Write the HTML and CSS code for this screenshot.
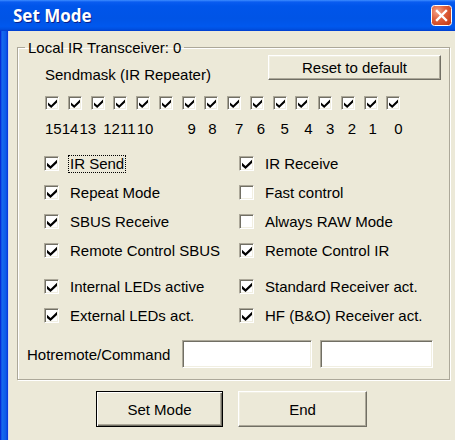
FILE: index.html
```html
<!DOCTYPE html>
<html lang="en">
<head>
<meta charset="utf-8">
<title>Set Mode</title>
<link rel="stylesheet" href="styles.css">
</head>
<body>
<div class="window">
  <div class="titlebar">
    <span class="title">Set Mode</span>
    <button class="close" aria-label="Close">
      <svg width="21" height="21" viewBox="0 0 21 21">
        <defs>
          <radialGradient id="closeFill" cx="0.3" cy="0.3" r="0.9">
            <stop offset="0" stop-color="#f4a48a"/>
            <stop offset="0.45" stop-color="#e0603c"/>
            <stop offset="1" stop-color="#c23a14"/>
          </radialGradient>
        </defs>
        <rect x="0.5" y="0.5" width="20" height="20" rx="3" fill="url(#closeFill)" stroke="#fff"/>
        <path d="M6 6 L15 15 M15 6 L6 15" stroke="#fff" stroke-width="2.4" stroke-linecap="square"/>
      </svg>
    </button>
  </div>
  <div class="frame">
    <div class="client">
      <fieldset class="group">
        <legend>Local IR Transceiver: 0</legend>

        <div class="mask-head">
          <span class="mask-label">Sendmask (IR Repeater)</span>
          <button class="btn reset">Reset to default</button>
        </div>

        <div class="mask-boxes">
          <span class="cb on"></span><span class="cb on"></span><span class="cb on"></span><span class="cb on"></span>
          <span class="cb on"></span><span class="cb on"></span><span class="cb on"></span><span class="cb on"></span>
          <span class="cb on"></span><span class="cb on"></span><span class="cb on"></span><span class="cb on"></span>
          <span class="cb on"></span><span class="cb on"></span><span class="cb on"></span><span class="cb on"></span>
        </div>

        <div class="mask-nums">
          <span>15</span><span>14</span><span>13</span><span>12</span>
          <span>11</span><span>10</span><span>9</span><span>8</span>
          <span>7</span><span>6</span><span>5</span><span>4</span>
          <span>3</span><span>2</span><span>1</span><span>0</span>
        </div>

        <div class="opts">
          <label class="opt"><span class="cb on"></span><span class="txt focus">IR Send</span></label>
          <label class="opt"><span class="cb on"></span><span class="txt">IR Receive</span></label>
          <label class="opt"><span class="cb on"></span><span class="txt">Repeat Mode</span></label>
          <label class="opt"><span class="cb"></span><span class="txt">Fast control</span></label>
          <label class="opt"><span class="cb on"></span><span class="txt">SBUS Receive</span></label>
          <label class="opt"><span class="cb"></span><span class="txt">Always RAW Mode</span></label>
          <label class="opt"><span class="cb on"></span><span class="txt">Remote Control SBUS</span></label>
          <label class="opt"><span class="cb on"></span><span class="txt">Remote Control IR</span></label>
        </div>

        <div class="opts leds">
          <label class="opt"><span class="cb on"></span><span class="txt">Internal LEDs active</span></label>
          <label class="opt"><span class="cb on"></span><span class="txt">Standard Receiver act.</span></label>
          <label class="opt"><span class="cb on"></span><span class="txt">External LEDs act.</span></label>
          <label class="opt"><span class="cb on"></span><span class="txt">HF (B&amp;O) Receiver act.</span></label>
        </div>

        <div class="hot-row">
          <span class="hot-label">Hotremote/Command</span>
          <span class="field wide"></span>
          <span class="field narrow"></span>
        </div>
      </fieldset>

      <div class="actions">
        <button class="btn default">Set Mode</button>
        <button class="btn end">End</button>
      </div>
    </div>
  </div>
</div>
</body>
</html>
```
FILE: styles.css
```css
* {
  box-sizing: border-box;
}

html,
body {
  margin: 0;
  padding: 0;
}

body {
  width: 455px;
  height: 440px;
  overflow: hidden;
  background: #ece9d8;
  color: #000;
  font-family: "Liberation Sans", Arial, sans-serif;
  font-size: 15px;
  line-height: 17px;
}

/* ---------- window chrome ---------- */

.window {
  width: 455px;
  height: 440px;
  display: flex;
  flex-direction: column;
}

.titlebar {
  flex: none;
  height: 31px;
  display: flex;
  align-items: center;
  padding: 0 3px 0 13px;
  background: linear-gradient(180deg, #3d8dff 0, #0a5cf0 2px, #0055ea 6px, #0054e6 60%, #0058ee 85%, #0050e0 94%, #003ccf 100%);
}

.title {
  flex: 1;
  color: #fff;
  font-family: "Open Sans", "DejaVu Sans", sans-serif;
  font-weight: 700;
  font-size: 17px;
  line-height: 20px;
  text-shadow: 1px 1px 0 #0a1f8a;
}

.close {
  width: 21px;
  height: 21px;
  padding: 0;
  border: 0;
  background: none;
  display: block;
}

.close svg {
  display: block;
}

.frame {
  flex: 1;
  display: flex;
  padding: 0 0 3px 8px;
  background:
    linear-gradient(to right, #0019cf 0, #166aee 2px, #0b5ae8 6px, #0831d9 8px) left top / 8px 100% no-repeat,
    #0a3fdc;
}

.client {
  flex: 1;
  background: #ece9d8;
  box-shadow: inset 1px 0 0 #d6dbf0;
  padding: 8px 0 13px 9px;
}

/* ---------- group box ---------- */

.group {
  margin: 0;
  width: 433px;
  padding: 0 0 11px 0;
  border: 1px solid #aca899;
  box-shadow: inset 1px 1px 0 #fff, 1px 1px 0 #fff;
}

.group legend {
  margin-left: 7px;
  padding: 0 3px;
}

.mask-head {
  display: flex;
  align-items: flex-start;
  margin-top: -1px;
  padding-left: 27px;
}

.mask-label {
  padding-top: 11px;
}

.reset {
  margin-left: auto;
  margin-right: 8px;
  width: 173px;
  height: 25px;
}

.mask-boxes,
.mask-nums {
  display: grid;
  grid-template-columns: repeat(16, 22.75px);
  padding-left: 27px;
}

.mask-boxes {
  margin-top: 13px;
}

.mask-nums {
  margin-top: 10px;
  white-space: nowrap;
}

.mask-nums span:nth-child(1) { margin-left: 0; }
.mask-nums span:nth-child(2) { margin-left: -6px; }
.mask-nums span:nth-child(3) { margin-left: -11px; }
.mask-nums span:nth-child(4) { margin-left: -10px; }
.mask-nums span:nth-child(5) { margin-left: -16px; }
.mask-nums span:nth-child(6) { margin-left: -22px; }
.mask-nums span:nth-child(7) { margin-left: 6px; }
.mask-nums span:nth-child(8) { margin-left: 4px; }
.mask-nums span:nth-child(9) { margin-left: 8px; }
.mask-nums span:nth-child(10) { margin-left: 7px; }
.mask-nums span:nth-child(11) { margin-left: 8px; }
.mask-nums span:nth-child(12) { margin-left: 9px; }
.mask-nums span:nth-child(13) { margin-left: 8px; }
.mask-nums span:nth-child(14) { margin-left: 7px; }
.mask-nums span:nth-child(15) { margin-left: 5px; }
.mask-nums span:nth-child(16) { margin-left: 8px; }

/* ---------- check boxes ---------- */

.cb {
  display: block;
  width: 14px;
  height: 14px;
  background: #fff;
  border: 1px solid;
  border-color: #aca899 #fff #fff #aca899;
  box-shadow: inset 1px 1px 0 #716f64, inset -1px -1px 0 #f1efe2;
  position: relative;
}

/* classic bold tick */
.cb.on::after {
  content: "";
  position: absolute;
  left: 2px;
  top: 2px;
  width: 9px;
  height: 9px;
  background: url("data:image/svg+xml;utf8,<svg xmlns='http://www.w3.org/2000/svg' viewBox='0 0 9 9'><path d='M0 3.4 L3.2 6.2 L9 0.6 V3.6 L3.2 9 L0 6.2 Z' fill='black'/></svg>") center / 9px 9px no-repeat;
}

.opts {
  display: grid;
  grid-template-columns: 195px 1fr;
  padding-left: 26px;
  margin-top: 12px;
}

.opts.leds {
  margin-top: 7px;
}

.opt {
  display: flex;
  align-items: center;
  height: 29px;
}

.opt .cb {
  width: 15px;
  height: 15px;
}

.opt .cb.on::after {
  left: 2px;
  top: 2px;
  width: 10px;
  height: 10px;
  background-size: 10px 10px;
}

.txt {
  margin-left: 9px;
  padding: 0 1px;
  border: 1px dotted transparent;
  line-height: 16px;
}

.txt.focus {
  border-color: #000;
}

/* ---------- hotremote row ---------- */

.hot-row {
  display: flex;
  align-items: center;
  margin-top: 10px;
  padding-left: 9px;
}

.hot-label {
  width: 155px;
}

.field {
  display: block;
  height: 28px;
  background: #fff;
  border: 1px solid;
  border-color: #aca899 #fff #fff #aca899;
  box-shadow: inset 1px 1px 0 #716f64, inset -1px -1px 0 #f1efe2;
}

.field.wide {
  width: 130px;
}

.field.narrow {
  width: 113px;
  margin-left: 8px;
}

/* ---------- buttons ---------- */

.btn {
  font: inherit;
  color: #000;
  background: #ece9d8;
  padding: 0;
  border: 1px solid;
  border-color: #fff #716f64 #716f64 #fff;
  box-shadow: inset -1px -1px 0 #aca899, inset 1px 1px 0 #f1efe2;
}

.actions {
  display: flex;
  gap: 15px;
  margin-top: 11px;
  padding-left: 79px;
}

.actions .btn {
  height: 36px;
}

.btn.default {
  width: 127px;
  border-color: #000;
  box-shadow: inset 1px 1px 0 #fff, inset -1px -1px 0 #716f64, inset -2px -2px 0 #aca899;
}

.btn.end {
  width: 129px;
}
```
